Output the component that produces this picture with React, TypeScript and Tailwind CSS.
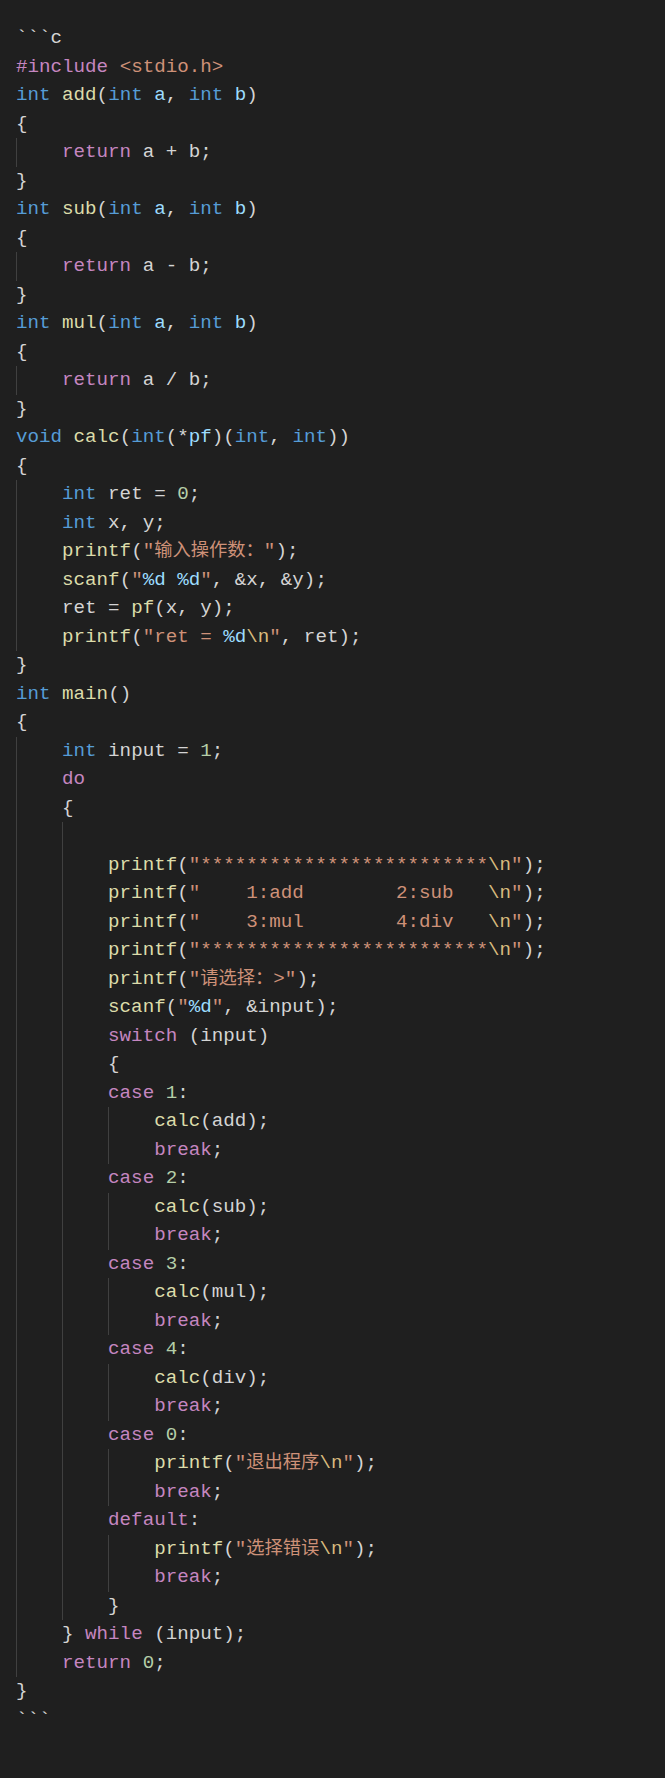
import React from 'react';

type Tok = [string, string];

// token kind -> colour class
const tone: Record<string, string> = {
  K: 'text-[#569cd6]',
  C: 'text-[#c586c0]',
  F: 'text-[#dcdcaa]',
  V: 'text-[#9cdcfe]',
  P: 'text-[#d4d4d4]',
  S: 'text-[#ce9178]',
  Z: 'text-[#ce9178] text-[18.3px]',
  N: 'text-[#b5cea8]',
  E: 'text-[#d7ba7d]',
  D: 'text-[#9cdcfe]',
};

// [indent guides, tokens]
const lines: [number, Tok[]][] = [
  [0, [['P', '```c']]],
  [0, [['C', '#include'], ['S', ' <stdio.h>']]],
  [0, [['K', 'int'], ['P', ' '], ['F', 'add'], ['P', '('], ['K', 'int'], ['P', ' '], ['V', 'a'], ['P', ', '], ['K', 'int'], ['P', ' '], ['V', 'b'], ['P', ')']]],
  [0, [['P', '{']]],
  [1, [['C', 'return'], ['P', ' a + b;']]],
  [0, [['P', '}']]],
  [0, [['K', 'int'], ['P', ' '], ['F', 'sub'], ['P', '('], ['K', 'int'], ['P', ' '], ['V', 'a'], ['P', ', '], ['K', 'int'], ['P', ' '], ['V', 'b'], ['P', ')']]],
  [0, [['P', '{']]],
  [1, [['C', 'return'], ['P', ' a - b;']]],
  [0, [['P', '}']]],
  [0, [['K', 'int'], ['P', ' '], ['F', 'mul'], ['P', '('], ['K', 'int'], ['P', ' '], ['V', 'a'], ['P', ', '], ['K', 'int'], ['P', ' '], ['V', 'b'], ['P', ')']]],
  [0, [['P', '{']]],
  [1, [['C', 'return'], ['P', ' a / b;']]],
  [0, [['P', '}']]],
  [0, [['K', 'void'], ['P', ' '], ['F', 'calc'], ['P', '('], ['K', 'int'], ['P', '(*'], ['V', 'pf'], ['P', ')('], ['K', 'int'], ['P', ', '], ['K', 'int'], ['P', '))']]],
  [0, [['P', '{']]],
  [1, [['K', 'int'], ['P', ' ret = '], ['N', '0'], ['P', ';']]],
  [1, [['K', 'int'], ['P', ' x, y;']]],
  [1, [['F', 'printf'], ['P', '('], ['S', '"'], ['Z', '输入操作数：'], ['S', '"'], ['P', ');']]],
  [1, [['F', 'scanf'], ['P', '('], ['S', '"'], ['D', '%d'], ['S', ' '], ['D', '%d'], ['S', '"'], ['P', ', &x, &y);']]],
  [1, [['P', 'ret = '], ['F', 'pf'], ['P', '(x, y);']]],
  [1, [['F', 'printf'], ['P', '('], ['S', '"ret = '], ['D', '%d'], ['E', '\\n'], ['S', '"'], ['P', ', ret);']]],
  [0, [['P', '}']]],
  [0, [['K', 'int'], ['P', ' '], ['F', 'main'], ['P', '()']]],
  [0, [['P', '{']]],
  [1, [['K', 'int'], ['P', ' input = '], ['N', '1'], ['P', ';']]],
  [1, [['C', 'do']]],
  [1, [['P', '{']]],
  [2, []],
  [2, [['F', 'printf'], ['P', '('], ['S', '"*************************'], ['E', '\\n'], ['S', '"'], ['P', ');']]],
  [2, [['F', 'printf'], ['P', '('], ['S', '"    1:add        2:sub   '], ['E', '\\n'], ['S', '"'], ['P', ');']]],
  [2, [['F', 'printf'], ['P', '('], ['S', '"    3:mul        4:div   '], ['E', '\\n'], ['S', '"'], ['P', ');']]],
  [2, [['F', 'printf'], ['P', '('], ['S', '"*************************'], ['E', '\\n'], ['S', '"'], ['P', ');']]],
  [2, [['F', 'printf'], ['P', '('], ['S', '"'], ['Z', '请选择：'], ['S', '>"'], ['P', ');']]],
  [2, [['F', 'scanf'], ['P', '('], ['S', '"'], ['D', '%d'], ['S', '"'], ['P', ', &input);']]],
  [2, [['C', 'switch'], ['P', ' (input)']]],
  [2, [['P', '{']]],
  [2, [['C', 'case'], ['P', ' '], ['N', '1'], ['P', ':']]],
  [3, [['F', 'calc'], ['P', '(add);']]],
  [3, [['C', 'break'], ['P', ';']]],
  [2, [['C', 'case'], ['P', ' '], ['N', '2'], ['P', ':']]],
  [3, [['F', 'calc'], ['P', '(sub);']]],
  [3, [['C', 'break'], ['P', ';']]],
  [2, [['C', 'case'], ['P', ' '], ['N', '3'], ['P', ':']]],
  [3, [['F', 'calc'], ['P', '(mul);']]],
  [3, [['C', 'break'], ['P', ';']]],
  [2, [['C', 'case'], ['P', ' '], ['N', '4'], ['P', ':']]],
  [3, [['F', 'calc'], ['P', '(div);']]],
  [3, [['C', 'break'], ['P', ';']]],
  [2, [['C', 'case'], ['P', ' '], ['N', '0'], ['P', ':']]],
  [3, [['F', 'printf'], ['P', '('], ['S', '"'], ['Z', '退出程序'], ['E', '\\n'], ['S', '"'], ['P', ');']]],
  [3, [['C', 'break'], ['P', ';']]],
  [2, [['C', 'default'], ['P', ':']]],
  [3, [['F', 'printf'], ['P', '('], ['S', '"'], ['Z', '选择错误'], ['E', '\\n'], ['S', '"'], ['P', ');']]],
  [3, [['C', 'break'], ['P', ';']]],
  [2, [['P', '}']]],
  [1, [['P', '} '], ['C', 'while'], ['P', ' (input);']]],
  [1, [['C', 'return'], ['P', ' '], ['N', '0'], ['P', ';']]],
  [0, [['P', '}']]],
  [0, [['P', '```']]],
];

const App: React.FC = () => {
  return (
    <div className="min-h-[1778px] bg-[#1f1f1f] pt-6 pl-4">
      <div className="font-['Liberation_Mono','Noto_Sans_CJK_SC',monospace] text-[19.2px] leading-[28.5px]">
        {lines.map(([guides, toks], i) => (
          <div key={i} className="flex h-[28.5px] whitespace-pre">
            {Array.from({ length: guides }).map((_, g) => (
              <span key={g} className="w-[4ch] shrink-0 border-l border-[#404040]" />
            ))}
            <span>
              {toks.map(([kind, text], j) => (
                <span key={j} className={tone[kind]}>
                  {text}
                </span>
              ))}
            </span>
          </div>
        ))}
      </div>
    </div>
  );
};

export default App;
